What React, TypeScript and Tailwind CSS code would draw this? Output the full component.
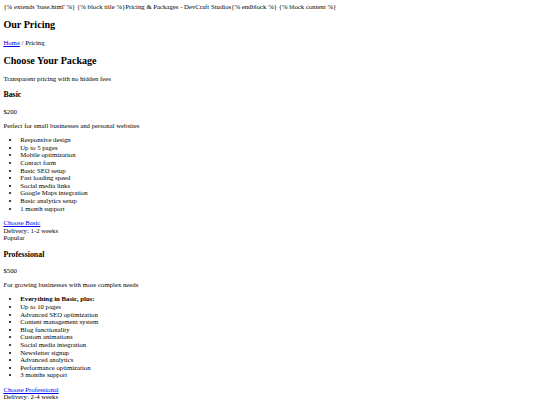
import React from "react";

const basic = [
  "Responsive design",
  "Up to 5 pages",
  "Mobile optimization",
  "Contact form",
  "Basic SEO setup",
  "Fast loading speed",
  "Social media links",
  "Google Maps integration",
  "Basic analytics setup",
  "1 month support",
];

const pro = [
  "Up to 10 pages",
  "Advanced SEO optimization",
  "Content management system",
  "Blog functionality",
  "Custom animations",
  "Social media integration",
  "Newsletter signup",
  "Advanced analytics",
  "Performance optimization",
  "3 months support",
];

const linkCls = "text-[#0000ee] underline";
const h2Cls = "text-[24px] leading-[27px] font-bold my-[19.92px]";
const h3Cls = "text-[18.72px] leading-[22px] font-bold my-[18.72px]";

export default function App() {
  return (
    <div className="[zoom:0.421875] bg-white text-black font-['Liberation_Serif','Times_New_Roman',serif] text-[16px] leading-[18px] m-0">
      <div className="p-[8px] w-[1280px] min-h-[960px] box-border">
        {"{% extends 'base.html' %} {% block title %}Pricing & Packages - DevCraft Studios{% endblock %} {% block content %}"}
        <h2 className={h2Cls}>Our Pricing</h2>
        <div className="my-[16px]">
          <a href="#" className={linkCls}>Home</a> / Pricing
        </div>
        <h2 className={h2Cls}>Choose Your Package</h2>
        <p className="my-[16px]">Transparent pricing with no hidden fees</p>

        <div>
          <h3 className={h3Cls}>Basic</h3>
          <p className="my-[16px]">$200</p>
          <p className="my-[16px]">Perfect for small businesses and personal websites</p>
          <ul className="list-disc pl-[40px] my-[16px]">
            {basic.map((t) => (
              <li key={t}>{t}</li>
            ))}
          </ul>
          <a href="#" className={linkCls}>Choose Basic</a>
          <div>Delivery: 1-2 weeks</div>
        </div>

        <div>
          <div>Popular</div>
          <h3 className={h3Cls}>Professional</h3>
          <p className="my-[16px]">$500</p>
          <p className="my-[16px]">For growing businesses with more complex needs</p>
          <ul className="list-disc pl-[40px] my-[16px]">
            <li><strong className="font-bold">Everything in Basic, plus:</strong></li>
            {pro.map((t) => (
              <li key={t}>{t}</li>
            ))}
          </ul>
          <a href="#" className={linkCls}>Choose Professional</a>
          <div>Delivery: 2-4 weeks</div>
        </div>
      </div>
    </div>
  );
}
